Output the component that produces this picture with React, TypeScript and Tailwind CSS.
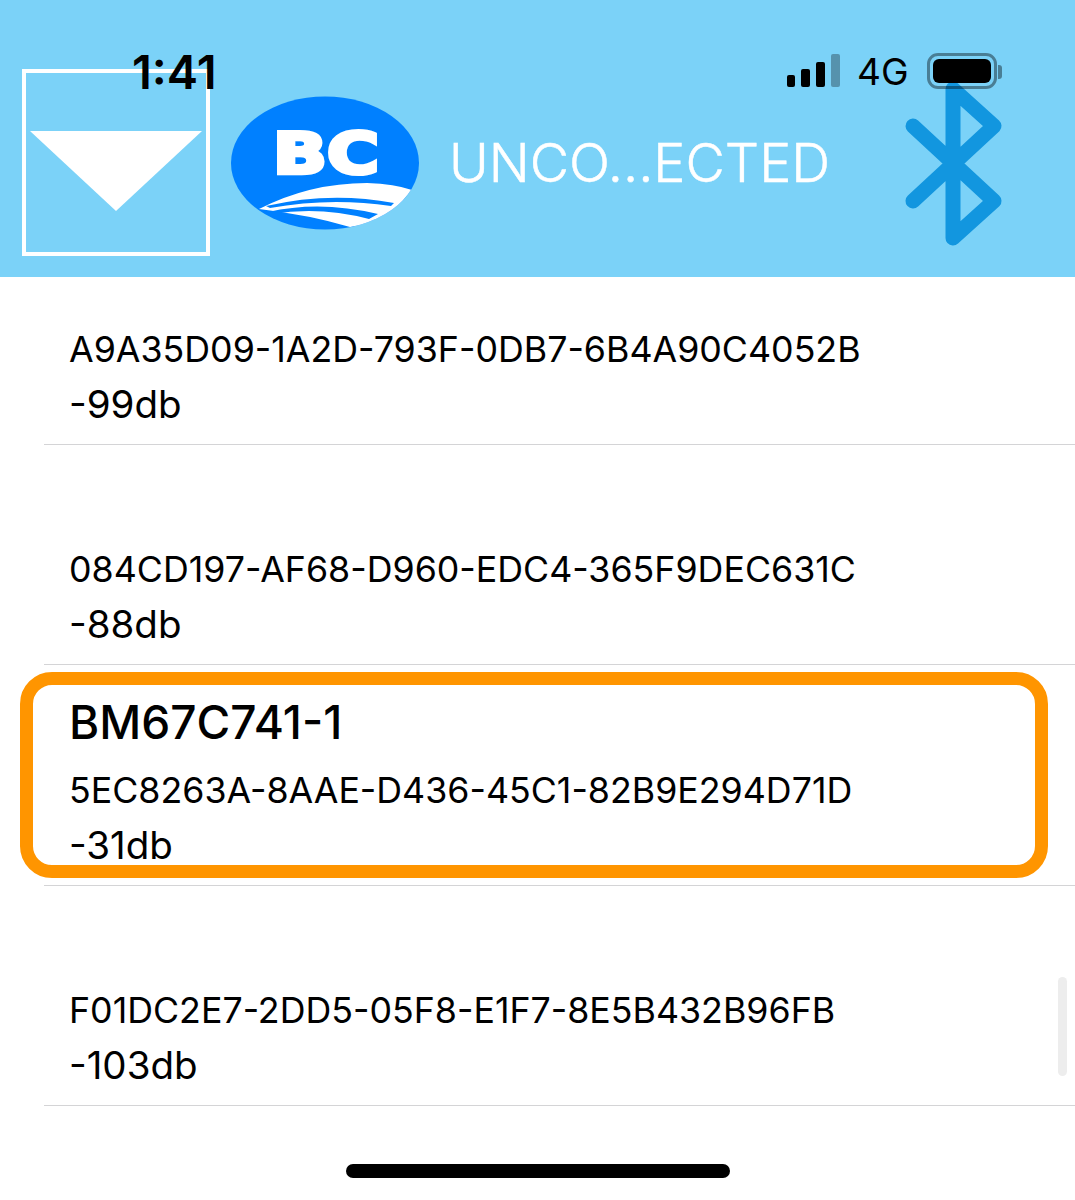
import React from 'react';

const font = { fontFamily: 'Inter, "Liberation Sans", sans-serif' };

interface Device {
  name?: string;
  uuid: string;
  rssi: string;
}

const devices: Device[] = [
  { uuid: 'A9A35D09-1A2D-793F-0DB7-6B4A90C4052B', rssi: '-99db' },
  { uuid: '084CD197-AF68-D960-EDC4-365F9DEC631C', rssi: '-88db' },
  { name: 'BM67C741-1', uuid: '5EC8263A-8AAE-D436-45C1-82B9E294D71D', rssi: '-31db' },
  { uuid: 'F01DC2E7-2DD5-05F8-E1F7-8E5B432B96FB', rssi: '-103db' },
];

function Logo() {
  return (
    <svg width="188" height="134" viewBox="231 96 188 134" className="shrink-0">
      <defs>
        <clipPath id="oval">
          <ellipse cx="325" cy="163" rx="94" ry="66.5" />
        </clipPath>
      </defs>
      <ellipse cx="325" cy="163" rx="94" ry="66.5" fill="#0080ff" />
      <text
        x="273"
        y="174"
        textLength="106"
        lengthAdjust="spacingAndGlyphs"
        fill="#fff"
        stroke="#fff"
        strokeWidth="4"
        strokeLinejoin="miter"
        fontSize="57"
        fontWeight="700"
        fontFamily="DejaVu Sans, sans-serif"
      >
        BC
      </text>
      <g clipPath="url(#oval)">
        <path d="M259 209 Q310 183 367 183 Q395 184 412 190 L385 222 L350 227 Q310 215 259 209 Z" fill="#fff" />
        <path d="M266 206 Q330 191 394 203 L391 206 Q330 197 270 208 Z" fill="#0080ff" />
        <path d="M268 212 Q320 200 378 214 L369 219 Q320 206 272 214 Z" fill="#0080ff" />
      </g>
    </svg>
  );
}

function StatusBar() {
  return (
    <div className="absolute top-0 left-0 w-full h-[46px]">
      <span className="absolute left-[132px] top-[45px] text-[47px] leading-[54px] font-semibold text-black">1:41</span>
      <div className="absolute left-[787px] top-[54px] h-[33px] flex items-end gap-[6px]">
        <span className="w-[8px] h-[12px] rounded-[2px] bg-black" />
        <span className="w-[9px] h-[18px] rounded-[2px] bg-black" />
        <span className="w-[9px] h-[25px] rounded-[2px] bg-black" />
        <span className="w-[9px] h-[33px] rounded-[2px] bg-black/30" />
      </div>
      <span className="absolute left-[857px] top-[50px] text-[37px] leading-[44px] text-black">4G</span>
      <div className="absolute left-[927px] top-[53px] w-[70px] h-[36px] rounded-[11px] border-[3px] border-black/40 p-[3px]">
        <div className="w-full h-full rounded-[6px] bg-black" />
      </div>
      <span className="absolute left-[998px] top-[65px] w-[4px] h-[14px] rounded-r-[3px] bg-black/40" />
    </div>
  );
}

export default function App() {
  return (
    <div className="relative w-[1075px] h-[1200px] overflow-hidden bg-white" style={font}>
      <header className="h-[277px] pt-[48px] pl-[22px] flex items-center bg-[#7bd2f8]">
        <button className="w-[188px] h-[187px] shrink-0 border-[4px] border-white flex justify-center pt-[58px]">
          <span className="block w-[172px] h-[80px] bg-white [clip-path:polygon(0_0,100%_0,50%_100%)]" />
        </button>
        <div className="ml-[21px]">
          <Logo />
        </div>
        <span className="ml-[30px] text-[54px] leading-none font-light text-white whitespace-nowrap [-webkit-text-stroke:0.5px_white]">UNCO...ECTED</span>
        <svg width="112" height="176" viewBox="898 76 112 176" fill="none" className="absolute left-[898px] top-[76px]">
          <path
            d="M913 126 L994 201 L953 238 L953 89 L994 126 L913 201"
            stroke="#1296df"
            strokeWidth="15"
            strokeLinecap="round"
            strokeLinejoin="round"
          />
        </svg>
      </header>

      <StatusBar />

      <ul>
        {devices.map((d, i) => (
          <li
            key={d.uuid}
            className={`relative ml-[44px] flex flex-col justify-end border-b border-[#d4d4d6] pb-[12px] ${i === 0 ? 'h-[167.5px]' : 'h-[220.6px]'}`}
          >
            {d.name && (
              <div className="pl-[25px] mb-[7px] text-[46px] leading-[68px] font-medium text-black">{d.name}</div>
            )}
            <div className="pl-[25px] text-[35.75px] leading-[55px] text-black whitespace-nowrap">{d.uuid}</div>
            <div className="pl-[25px] text-[38.5px] leading-[55px] text-black">{d.rssi}</div>
            {d.name && (
              <div className="absolute left-[-24px] top-[7px] w-[1028px] h-[206px] rounded-[32px] border-[13px] border-[#ff9500]" />
            )}
          </li>
        ))}
      </ul>

      {/* scroll indicator */}
      <div className="absolute left-[1058px] top-[977px] w-[9px] h-[99px] rounded-full bg-[#ededed]" />
      {/* home indicator */}
      <div className="absolute left-[346px] top-[1164px] w-[384px] h-[14px] rounded-full bg-black" />
    </div>
  );
}
